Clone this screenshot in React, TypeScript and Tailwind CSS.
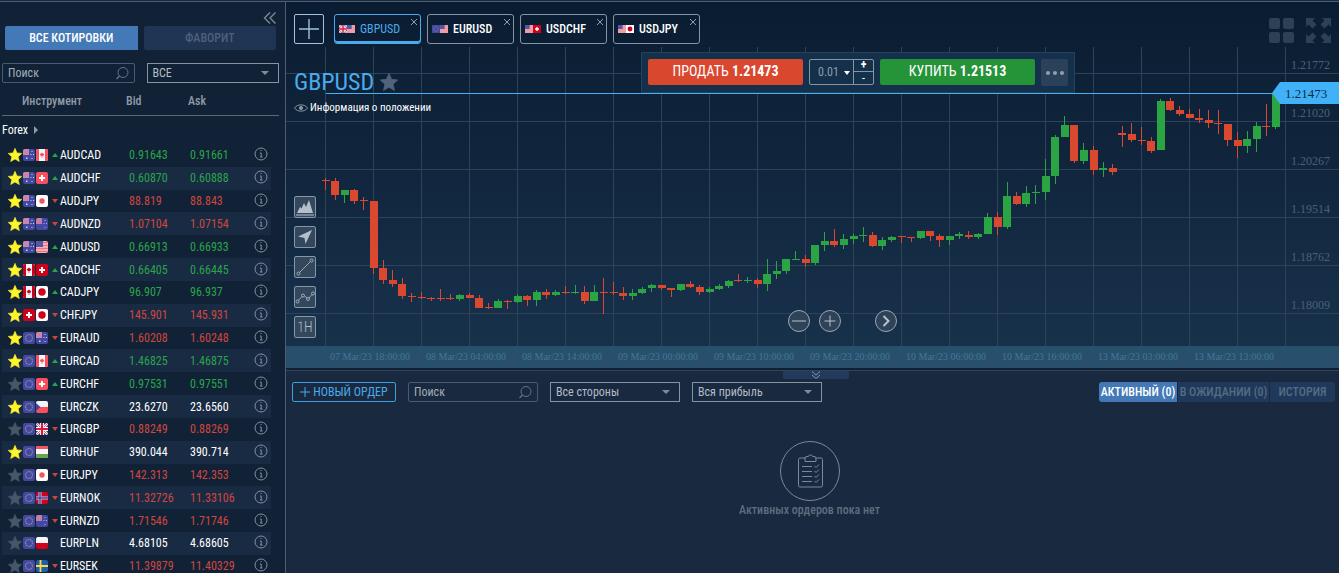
import { useState } from 'react';
import type { ReactNode } from 'react';

// --- Data types ---
type Country = 'au' | 'ca' | 'ch' | 'jp' | 'nz' | 'us' | 'eu' | 'cz' | 'gb' | 'hu' | 'no' | 'pl' | 'se';
type Trend = 'up' | 'down' | 'flat';

interface Quote {
  symbol: string;
  flags: [Country, Country];
  bid: string;
  ask: string;
  trend: Trend;
  favorite: boolean;
  soft?: boolean;
}

const quotes: Quote[] = [
  { symbol: 'AUDCAD', flags: ['au', 'ca'], bid: '0.91643', ask: '0.91661', trend: 'up', favorite: true, soft: true },
  { symbol: 'AUDCHF', flags: ['au', 'ch'], bid: '0.60870', ask: '0.60888', trend: 'up', favorite: true, soft: true },
  { symbol: 'AUDJPY', flags: ['au', 'jp'], bid: '88.819', ask: '88.843', trend: 'down', favorite: true, soft: true },
  { symbol: 'AUDNZD', flags: ['au', 'nz'], bid: '1.07104', ask: '1.07154', trend: 'down', favorite: true, soft: true },
  { symbol: 'AUDUSD', flags: ['au', 'us'], bid: '0.66913', ask: '0.66933', trend: 'up', favorite: true, soft: true },
  { symbol: 'CADCHF', flags: ['ca', 'ch'], bid: '0.66405', ask: '0.66445', trend: 'up', favorite: true },
  { symbol: 'CADJPY', flags: ['ca', 'jp'], bid: '96.907', ask: '96.937', trend: 'up', favorite: true },
  { symbol: 'CHFJPY', flags: ['ch', 'jp'], bid: '145.901', ask: '145.931', trend: 'down', favorite: true },
  { symbol: 'EURAUD', flags: ['eu', 'au'], bid: '1.60208', ask: '1.60248', trend: 'down', favorite: true, soft: true },
  { symbol: 'EURCAD', flags: ['eu', 'ca'], bid: '1.46825', ask: '1.46875', trend: 'up', favorite: true, soft: true },
  { symbol: 'EURCHF', flags: ['eu', 'ch'], bid: '0.97531', ask: '0.97551', trend: 'up', favorite: false, soft: true },
  { symbol: 'EURCZK', flags: ['eu', 'cz'], bid: '23.6270', ask: '23.6560', trend: 'flat', favorite: true, soft: true },
  { symbol: 'EURGBP', flags: ['eu', 'gb'], bid: '0.88249', ask: '0.88269', trend: 'down', favorite: false },
  { symbol: 'EURHUF', flags: ['eu', 'hu'], bid: '390.044', ask: '390.714', trend: 'flat', favorite: true, soft: true },
  { symbol: 'EURJPY', flags: ['eu', 'jp'], bid: '142.313', ask: '142.353', trend: 'down', favorite: false, soft: true },
  { symbol: 'EURNOK', flags: ['eu', 'no'], bid: '11.32726', ask: '11.33106', trend: 'down', favorite: false },
  { symbol: 'EURNZD', flags: ['eu', 'nz'], bid: '1.71546', ask: '1.71746', trend: 'down', favorite: false },
  { symbol: 'EURPLN', flags: ['eu', 'pl'], bid: '4.68105', ask: '4.68605', trend: 'flat', favorite: false },
  { symbol: 'EURSEK', flags: ['eu', 'se'], bid: '11.39879', ask: '11.40329', trend: 'down', favorite: false },
];

const openTabs: { symbol: string; flags: [Country, Country] }[] = [
  { symbol: 'GBPUSD', flags: ['gb', 'us'] },
  { symbol: 'EURUSD', flags: ['eu', 'us'] },
  { symbol: 'USDCHF', flags: ['us', 'ch'] },
  { symbol: 'USDJPY', flags: ['us', 'jp'] },
];

const timeLabels = [
  '07 Mar/23 18:00:00', '08 Mar/23 04:00:00', '08 Mar/23 14:00:00', '09 Mar/23 00:00:00', '09 Mar/23 10:00:00',
  '09 Mar/23 20:00:00', '10 Mar/23 06:00:00', '10 Mar/23 16:00:00', '13 Mar/23 03:00:00', '13 Mar/23 13:00:00',
];

const priceLabels = ['1.21772', '1.21020', '1.20267', '1.19514', '1.18762', '1.18009'];

// [direction, body top, body bottom, wick top, wick bottom]
type Candle = ['g' | 'r', number, number, number, number];

const candles: Candle[] = [
  ['r', 180, 181, 178, 190], ['r', 181, 195, 178, 200], ['g', 190, 195, 190, 203], ['r', 190, 201, 189, 204], ['r', 200, 201, 197, 210],
  ['r', 201, 268, 201, 274], ['r', 268, 280, 260, 284], ['r', 280, 284, 270, 287], ['r', 284, 296, 278, 299], ['r', 296, 297, 293, 302],
  ['r', 297, 298, 292, 299], ['r', 298, 299, 297, 301], ['r', 298, 299, 289, 301], ['r', 298, 299, 294, 300], ['g', 295, 299, 294, 301],
  ['r', 295, 298, 293, 298], ['r', 298, 308, 295, 308], ['r', 307, 308, 303, 309], ['g', 301, 308, 299, 308], ['r', 301, 302, 300, 309],
  ['g', 296, 302, 294, 303], ['r', 296, 300, 295, 306], ['g', 292, 300, 290, 306], ['r', 292, 295, 289, 299], ['g', 292, 295, 290, 296],
  ['r', 292, 293, 286, 294], ['g', 292, 293, 285, 294], ['r', 292, 301, 286, 304], ['g', 292, 301, 285, 301], ['r', 292, 293, 278, 314],
  ['r', 292, 293, 282, 295], ['r', 293, 296, 287, 300], ['g', 293, 296, 289, 300], ['g', 289, 293, 287, 294], ['g', 285, 288, 284, 292],
  ['r', 285, 288, 285, 290], ['r', 288, 290, 288, 297], ['g', 284, 290, 284, 291], ['r', 284, 287, 281, 288], ['r', 287, 292, 285, 295],
  ['g', 289, 292, 287, 293], ['g', 286, 289, 284, 290], ['g', 281, 286, 280, 288], ['r', 280, 281, 274, 282], ['g', 280, 281, 277, 283],
  ['r', 280, 284, 278, 288], ['g', 274, 284, 259, 291], ['g', 271, 274, 261, 279], ['g', 259, 271, 259, 274], ['g', 259, 260, 251, 260],
  ['r', 259, 263, 255, 267], ['g', 245, 263, 245, 265], ['g', 241, 245, 232, 251], ['r', 241, 245, 229, 247], ['g', 239, 245, 234, 249],
  ['g', 236, 239, 234, 244], ['g', 235, 236, 227, 242], ['r', 235, 246, 232, 247], ['g', 240, 246, 237, 250], ['g', 237, 240, 236, 242],
  ['r', 236, 237, 236, 243], ['r', 237, 238, 237, 242], ['g', 231, 238, 231, 239], ['r', 231, 236, 231, 241], ['r', 236, 240, 234, 247],
  ['g', 236, 240, 236, 245], ['g', 234, 236, 232, 239], ['r', 235, 237, 231, 239], ['g', 234, 237, 233, 239], ['g', 217, 234, 213, 234],
  ['r', 217, 227, 212, 235], ['g', 196, 227, 182, 229], ['r', 196, 204, 192, 205], ['g', 193, 204, 186, 207], ['g', 192, 193, 185, 204],
  ['g', 176, 192, 159, 200], ['g', 137, 176, 135, 184], ['g', 125, 137, 116, 137], ['r', 125, 161, 125, 163], ['g', 150, 161, 143, 164],
  ['r', 150, 170, 146, 175], ['g', 168, 170, 162, 177], ['r', 168, 172, 164, 175], ['r', 133, 135, 126, 147], ['r', 134, 140, 123, 142],
  ['r', 140, 141, 127, 145], ['r', 141, 151, 137, 153], ['g', 101, 150, 99, 150], ['r', 101, 110, 98, 111], ['r', 110, 114, 106, 116],
  ['r', 114, 118, 109, 118], ['r', 118, 120, 109, 123], ['r', 120, 123, 110, 128], ['r', 123, 124, 110, 134], ['r', 124, 140, 124, 146],
  ['r', 140, 146, 132, 158], ['g', 139, 146, 131, 153], ['g', 126, 139, 122, 152], ['r', 126, 127, 104, 136], ['g', 93, 127, 93, 129],
];

// --- Small drawings ---
function Flag({ country, soft, className }: { country: Country; soft?: boolean; className: string }) {
  const red = soft ? '#f8505c' : '#d0021b';
  const blue = '#4348a0';
  const white = '#f4f6fa';
  const art: Record<Country, ReactNode> = {
    au: (
      <>
        <rect width="12" height="12" fill={blue} />
        <path d="M0 0h6v6H0z" fill="#b58fc0" />
        <path d="M0 3h6M3 0v6" stroke="#f0758a" strokeWidth="1" />
        <path d="M8.500 2h1v1h-1zM7.500 5h1v1h-1zM10 5h1v1h-1zM8.500 9h1v1h-1zM3 8.500h1.500v1.500H3z" fill="#d4d8f0" />
      </>
    ),
    nz: (
      <>
        <rect width="12" height="12" fill={blue} />
        <path d="M0 0h6v6H0z" fill="#a783bd" />
        <path d="M0 3h6M3 0v6" stroke="#f0758a" strokeWidth="1" />
        <path d="M8.500 2h1v1h-1zM7.500 5h1v1h-1zM10 5h1v1h-1zM8.500 9h1v1h-1z" fill="#c9a8d8" />
      </>
    ),
    ca: (
      <>
        <rect width="12" height="12" fill={white} />
        <path d="M0 0h3v12H0zM9 0h3v12H9z" fill={red} />
        <path d="M6 3.500l1 1 1.300.5-1 2H4.700l-1-2L5 4.500zM5.700 6h.6v3h-.6z" fill={red} />
      </>
    ),
    ch: (
      <>
        <rect width="12" height="12" fill={red} />
        <path d="M5 3h2v2h2v2H7v2H5V7H3V5h2z" fill="#fff" />
      </>
    ),
    jp: (
      <>
        <rect width="12" height="12" fill="#fff" />
        <circle cx="6" cy="6" r={soft ? 2.7 : 3.7} fill={red} />
      </>
    ),
    us: (
      <>
        <rect width="12" height="12" fill="#f6c5cc" />
        <path d="M0 1.500h12M0 4.500h12M0 7.500h12M0 10.500h12" stroke="#f0707e" strokeWidth="1.500" />
        <path d="M0 0h7v6H0z" fill="#5257a6" />
      </>
    ),
    eu: (
      <>
        <rect width="12" height="12" fill={blue} />
        <circle cx="6" cy="6" r="3.500" fill="none" stroke="#8a83a0" strokeWidth="1.200" strokeDasharray="1.400 .5" />
      </>
    ),
    cz: (
      <>
        <rect width="12" height="6" fill={white} />
        <rect y="6" width="12" height="6" fill={red} />
        <path d="M0 2l4.500 4L0 10z" fill={blue} />
      </>
    ),
    gb: (
      <>
        <rect width="12" height="12" fill="#3d4599" />
        <path d="M0 0l12 12M12 0L0 12" stroke="#fff" strokeWidth="2.400" />
        <path d="M0 0l12 12M12 0L0 12" stroke="#e0304a" strokeWidth=".8" />
        <path d="M6 0v12M0 6h12" stroke="#fff" strokeWidth="4" />
        <path d="M6 0v12M0 6h12" stroke="#d91a35" strokeWidth="2.200" />
      </>
    ),
    hu: (
      <>
        <rect width="12" height="12" fill={white} />
        <rect width="12" height="3" fill={red} />
        <rect y="8" width="12" height="4" fill="#68a352" />
      </>
    ),
    no: (
      <>
        <rect width="12" height="12" fill={red} />
        <path d="M4 0v12M0 6h12" stroke="#c5c7e6" strokeWidth="3" />
        <path d="M4 0v12M0 6h12" stroke={blue} strokeWidth="1.400" />
      </>
    ),
    pl: (
      <>
        <rect width="12" height="6" fill={white} />
        <rect y="6" width="12" height="6" fill={red} />
      </>
    ),
    se: (
      <>
        <rect width="12" height="12" fill="#1c5fae" />
        <path d="M4.500 0v12M0 6h12" stroke="#ffd83a" strokeWidth="1.800" />
      </>
    ),
  };
  return (
    <svg viewBox="0 0 12 12" className={`block shrink-0 ${className}`} aria-hidden="true">
      {art[country]}
    </svg>
  );
}

function Star({ className }: { className: string }) {
  return (
    <svg viewBox="0 0 14 14" className={className} aria-hidden="true">
      <path
        fill="currentColor"
        stroke="currentColor"
        strokeWidth=".6"
        d="M7 .3l2 4.600 4.800.5-3.600 3.300 1.100 4.900L7 11.100l-4.300 2.500 1.100-4.900L.2 5.400 5 4.900z"
      />
    </svg>
  );
}

function TrendMark({ trend }: { trend: Trend }) {
  if (trend === 'flat') return null;
  return (
    <svg viewBox="0 0 6 4" className="h-1 w-1.5" aria-hidden="true">
      {trend === 'up' ? <path d="M3 0l3 4H0z" fill="#27a54a" /> : <path d="M0 0h6L3 4z" fill="#cf4438" />}
    </svg>
  );
}

function SearchBox({ id, className }: { id: string; className: string }) {
  return (
    <div className={`flex h-5 items-center rounded-[2px] border border-[#4a5b6e] px-[5px] ${className}`}>
      <input
        id={id}
        type="text"
        placeholder="Поиск"
        aria-label="Поиск"
        className="w-full min-w-0 bg-transparent text-xs leading-4 text-[#b4bcc6] outline-none placeholder:text-[#a3adb8]"
      />
      <svg viewBox="0 0 14 14" className="h-3.5 w-3.5 shrink-0" fill="none" stroke="#66748a" aria-hidden="true">
        <circle cx="8" cy="6.500" r="5" />
        <path d="M4.500 10L1.500 13" strokeWidth="1.200" />
      </svg>
    </div>
  );
}

function Dropdown({ label, options, className }: { label: string; options: string[]; className: string }) {
  return (
    <div className={`relative h-5 ${className}`}>
      <select
        aria-label={label}
        className="block h-5 w-full appearance-none border border-[#8494a3] bg-transparent px-[5px] text-xs leading-4 text-[#b4bcc6] outline-none"
      >
        {options.map((option) => (
          <option key={option}>{option}</option>
        ))}
      </select>
      <svg viewBox="0 0 8 4" className="pointer-events-none absolute top-2 right-2.5 h-1 w-2" aria-hidden="true">
        <path d="M0 0h8L4 4z" fill="#7d8b9a" />
      </svg>
    </div>
  );
}

// --- Left panel with quotes ---
function QuotesPanel() {
  const colors = { up: 'text-[#2aa44a]', down: 'text-[#d0463f]', flat: 'text-white' };

  return (
    <aside className="w-[286px] shrink-0 overflow-hidden border-r border-[#4b5f74] bg-[#112236] pl-0.5">
      <div className="flex h-6 items-end justify-end pr-2">
        <button type="button" aria-label="Свернуть" className="mb-0.5">
          <svg viewBox="0 0 14 12" className="block h-3 w-3.5" fill="none" stroke="#7b8794" strokeWidth="1.400">
            <path d="M7 .5L1.500 6 7 11.500M12.500.5L7 6l5.500 5.500" />
          </svg>
        </button>
      </div>

      <div className="flex gap-1.5 pr-[9px] pl-[3px] text-xs leading-4">
        <button type="button" className="h-6 flex-1 rounded-l-[2px] bg-[#4379b7] font-medium text-white">
          ВСЕ КОТИРОВКИ
        </button>
        <button type="button" className="h-6 flex-1 rounded-[2px] bg-[#1f3553] font-medium text-[#4d617c]">
          ФАВОРИТ
        </button>
      </div>

      <div className="mt-[13px] grid grid-cols-2 gap-3 pr-1.5">
        <SearchBox id="quote-search" className="min-w-0" />
        <Dropdown label="Категория" options={['ВСЕ', 'Forex']} className="min-w-0" />
      </div>

      <table className="mt-1 w-[277px] table-fixed border-collapse text-left text-xs leading-4">
        <colgroup>
          <col className="w-[48px]" />
          <col className="w-[10px]" />
          <col className="w-[69px]" />
          <col className="w-[61px]" />
          <col className="w-[64px]" />
          <col className="w-[17px]" />
          <col className="w-[8px]" />
        </colgroup>
        <thead>
          <tr className="h-[28px] border-b border-[#5b6a7a] text-[#8f9aa6]">
            <th colSpan={3} className="pl-5 font-medium">Инструмент</th>
            <th className="font-medium"><span className="-ml-[3px]">Bid</span></th>
            <th className="font-medium"><span className="-ml-0.5">Ask</span></th>
            <th colSpan={2}></th>
          </tr>
        </thead>
        <tbody>
          <tr className="h-[29px]">
            <th colSpan={7} scope="rowgroup" className="font-normal text-white">
              <button type="button" className="flex items-center gap-1.5">
                Forex
                <svg viewBox="0 0 4 8" className="h-2 w-1" aria-hidden="true">
                  <path d="M0 0l4 4-4 4z" fill="#8f9aa6" />
                </svg>
              </button>
            </th>
          </tr>
        </tbody>
        <tbody className="h-[434px]">
          {quotes.map((quote) => (
            <tr key={quote.symbol} className="group">
              <td className="p-0 group-even:bg-[#182b43]">
                <div className="flex items-center gap-px pl-1.5">
                  <Star className={`h-3.5 w-3.5 shrink-0 ${quote.favorite ? 'text-[#fff52c]' : 'text-[#465768]'}`} />
                  <Flag country={quote.flags[0]} soft={quote.soft} className="h-3 w-3 rounded-[2px]" />
                  <Flag country={quote.flags[1]} soft={quote.soft} className="h-3 w-3 rounded-[2px]" />
                </div>
              </td>
              <td className="p-0 group-even:bg-[#182b43]">
                <div className="flex justify-center"><TrendMark trend={quote.trend} /></div>
              </td>
              <td className="p-0 text-white group-even:bg-[#182b43]">{quote.symbol}</td>
              <td className={`p-0 group-even:bg-[#182b43] ${colors[quote.trend]}`}>{quote.bid}</td>
              <td className={`p-0 group-even:bg-[#182b43] ${colors[quote.trend]}`}>{quote.ask}</td>
              <td className="p-0 group-even:bg-[#182b43]">
                <button type="button" aria-label={`Информация ${quote.symbol}`} className="mb-0.5 block">
                  <svg viewBox="0 0 14 14" className="block h-3.5 w-3.5" fill="none" stroke="#8290a0">
                    <circle cx="7" cy="7" r="6" />
                    <path d="M6 6h1.200v4M6 10h2.500M6.500 3.500h1" />
                  </svg>
                </button>
              </td>
              <td></td>
            </tr>
          ))}
        </tbody>
      </table>
    </aside>
  );
}

// --- Candlestick chart ---
function PriceChart() {
  return (
    <svg viewBox="0 0 1053 344" preserveAspectRatio="xMaxYMin slice" className="absolute inset-0 h-full w-full" aria-label="GBPUSD">
      {/* coordinates below are in page space */}
      <g transform="translate(-286 -2)">
        <g stroke="#2c4359" shapeRendering="crispEdges">
          {priceLabels.map((label, i) => (
            <path key={label} d={`M286 ${73.5 + i * 48}H1339`} />
          ))}
          {Array.from({ length: 21 }, (_, i) => (
            <path key={i} d={`M${325.5 + i * 48} 47V346`} />
          ))}
        </g>
        {candles.map(([dir, top, bottom, high, low], i) => {
          const x = 325.5 + i * 9.6;
          const fill = dir === 'g' ? '#2ba544' : '#d9482f';
          return (
            <g key={i} fill={fill} shapeRendering="crispEdges">
              <rect x={x - 0.5} y={high} width="1" height={low - high} />
              <rect x={x - 4} y={top} width="8" height={bottom - top} />
            </g>
          );
        })}
        <rect x="326" y="93" width="949" height="1" fill="#42b2f8" />
        <path d="M1272 93l8-11h59v22h-59z" fill="#42b2f8" />
        <g fontFamily="'Liberation Serif', serif" fontSize="12" fill="#4b6076">
          {priceLabels.map((label, i) => (
            <text key={label} x="1291" y={69 + i * 48}>{label}</text>
          ))}
        </g>
        <text x="1285" y="98" fontFamily="'Liberation Serif', serif" fontSize="13" fill="#0c2b48">1.21473</text>
      </g>
    </svg>
  );
}

function ToolButton({ label, children }: { label: string; children: ReactNode }) {
  return (
    <button
      type="button"
      aria-label={label}
      className="flex h-[22px] w-[22px] items-center justify-center rounded-[2px] border border-[#8696a6] bg-[#34485d] text-[#b3bfca]"
    >
      {children}
    </button>
  );
}

function RoundButton({ label, children }: { label: string; children: ReactNode }) {
  return (
    <button type="button" aria-label={label} className="h-[22px] w-[22px] rounded-full border border-[#9aa8b5] bg-[#2e4358]">
      <svg viewBox="0 0 20 20" className="block h-5 w-5" fill="none" stroke="#b7c2cc">
        {children}
      </svg>
    </button>
  );
}

function TradeBar() {
  return (
    <div className="absolute top-[50px] right-[264px] flex h-[41px] items-start gap-1.5 border border-[#26415a] bg-[#15304b] px-1.5 pt-1.5">
      <button type="button" className="h-[26px] w-[155px] rounded-[2px] bg-[#d9472f] pb-0.5 text-sm leading-5 text-white">
        ПРОДАТЬ <b>1.21473</b>
      </button>
      <div className="flex h-[26px] w-[65px] rounded-[2px] border border-[#8595a5] text-[#8f9dab]">
        <div className="relative flex-1">
          <select aria-label="Объём" className="block h-full w-full appearance-none bg-transparent pl-2 text-xs leading-4 outline-none">
            <option>0.01</option>
            <option>0.10</option>
          </select>
          <svg viewBox="0 0 6 4" className="pointer-events-none absolute top-[11px] right-[3px] h-1 w-1.5" aria-hidden="true">
            <path d="M0 0h6L3 4z" fill="#fff" />
          </svg>
        </div>
        <div className="flex w-5 flex-col border-l border-[#8595a5] text-xs leading-[11px] text-white">
          <button type="button" aria-label="Увеличить" className="h-3 border-b border-[#8595a5] font-bold">+</button>
          <button type="button" aria-label="Уменьшить" className="h-3">-</button>
        </div>
      </div>
      <button type="button" className="h-[26px] w-[155px] rounded-[2px] bg-[#259338] pb-0.5 text-sm leading-5 text-white">
        КУПИТЬ <b>1.21513</b>
      </button>
      <button type="button" aria-label="Ещё" className="flex h-[27px] w-[27px] items-center justify-center gap-[3px] rounded-[2px] bg-[#2b4159]">
        <span className="h-1 w-1 rounded-full bg-[#8fa0b1]" />
        <span className="h-1 w-1 rounded-full bg-[#8fa0b1]" />
        <span className="h-1 w-1 rounded-full bg-[#8fa0b1]" />
      </button>
    </div>
  );
}

function ChartPanel() {
  const [active, setActive] = useState('GBPUSD');

  return (
    <section className="relative h-[344px] shrink-0 bg-linear-to-b from-[#0a1c31] to-[#18314b]">
      <PriceChart />

      <div className="relative flex items-start pt-3 pr-2 pl-2">
        <button type="button" aria-label="Добавить" className="flex h-[30px] w-[30px] items-center justify-center rounded-[2px] border border-[#a3c3d6]">
          <svg viewBox="0 0 20 20" className="h-5 w-5" stroke="#a3c3d6" strokeWidth="1.400">
            <path d="M10 0v20M0 10h20" />
          </svg>
        </button>
        <div className="ml-2.5 flex gap-1.5">
          {openTabs.map((tab) => (
            <div
              key={tab.symbol}
              className={`relative flex h-[30px] w-[87px] items-center rounded-[3px] border pl-1 ${
                active === tab.symbol ? 'border-[#4aabec] text-[#4aabec] shadow-[inset_0_-2px_0_#4aabec]' : 'border-[#8595a5] text-white'
              }`}
            >
              <button type="button" className="flex items-center text-xs leading-4" onClick={() => setActive(tab.symbol)}>
                <Flag country={tab.flags[0]} className="h-2 w-2" />
                <Flag country={tab.flags[1]} className="mr-[5px] h-2 w-2" />
                <span className={active === tab.symbol ? '' : 'font-medium'}>{tab.symbol}</span>
              </button>
              <button type="button" aria-label={`Закрыть ${tab.symbol}`} className="absolute top-1 right-[3px]">
                <svg viewBox="0 0 6 6" className="block h-1.5 w-1.5" stroke="#b5c0ca" strokeWidth=".8">
                  <path d="M0 0l6 6M6 0L0 6" />
                </svg>
              </button>
            </div>
          ))}
        </div>
        <div className="mt-1 ml-auto flex gap-3 text-[#2c4056]">
          <button type="button" aria-label="Сетка" className="grid h-[25px] w-[25px] grid-cols-2 gap-[3px]">
            <span className="h-[11px] rounded-[2px] bg-current" />
            <span className="h-[11px] rounded-[2px] bg-current" />
            <span className="h-[11px] rounded-[2px] bg-current" />
            <span className="h-[11px] rounded-[2px] bg-current" />
          </button>
          <button type="button" aria-label="Во весь экран">
            <svg viewBox="0 0 25 25" className="block h-[25px] w-[25px]" fill="currentColor">
              <path id="corner" d="M0 0h9L6.500 2.500l4 4-4 4-4-4L0 9z" />
              <use href="#corner" transform="rotate(90 12.500 12.500)" />
              <use href="#corner" transform="rotate(180 12.500 12.500)" />
              <use href="#corner" transform="rotate(270 12.500 12.500)" />
            </svg>
          </button>
        </div>
      </div>

      <div className="relative mt-[22px] flex w-fit items-center gap-1.5 pl-2">
        <h1 className="text-2xl leading-8 text-[#4aabec]">GBPUSD</h1>
        <Star className="h-[18px] w-[18px] text-[#50637a]" />
      </div>
      <button type="button" className="relative mt-1 ml-2 flex items-center gap-0.5 text-[11px] leading-3 text-white">
        <svg viewBox="0 0 14 8" className="h-2 w-3.5" fill="none" stroke="#8795a3">
          <path d="M.5 4C3-.2 11-.2 13.500 4 11 8.200 3 8.200.5 4z" />
          <circle cx="7" cy="4" r="1.600" fill="#8795a3" />
        </svg>
        Информация о положении
      </button>

      <TradeBar />

      <div className="absolute top-[194px] left-2 flex flex-col gap-2">
        <ToolButton label="Тип графика">
          <svg viewBox="0 0 20 20" className="h-5 w-5" fill="currentColor">
            <path d="M2 16l3-6 1.500 1.500L9 6l2 4 3-7 4 13z" />
            <path d="M1 17.500h18v1H1z" />
          </svg>
        </ToolButton>
        <ToolButton label="Курсор">
          <svg viewBox="0 0 20 20" className="h-5 w-5" fill="currentColor">
            <path d="M17 3l-6.500 14-1-6L3 9.500z" />
          </svg>
        </ToolButton>
        <ToolButton label="Линия">
          <svg viewBox="0 0 20 20" className="h-5 w-5" fill="none" stroke="currentColor" strokeWidth=".8">
            <path d="M4.500 15.500l11-11" />
            <circle cx="3.500" cy="16.500" r="1.500" />
            <circle cx="16.500" cy="3.500" r="1.500" />
          </svg>
        </ToolButton>
        <ToolButton label="Индикаторы">
          <svg viewBox="0 0 20 20" className="h-5 w-5" fill="none" stroke="currentColor" strokeWidth=".8">
            <path d="M3.500 13.200L7 9.500M9.500 9l2.500 2M14 11l3-3.500" />
            <circle cx="2.500" cy="14.500" r="1.500" />
            <circle cx="8" cy="8.500" r="1.500" />
            <circle cx="13" cy="12" r="1.500" />
            <circle cx="18" cy="6.500" r="1.500" />
          </svg>
        </ToolButton>
        <ToolButton label="Таймфрейм">
          <span className="text-sm leading-4 font-light">1H</span>
        </ToolButton>
      </div>

      <div className="absolute right-[442px] bottom-3.5 flex">
        <RoundButton label="Уменьшить масштаб"><path d="M3 10h14" /></RoundButton>
        <span className="w-[9px]" />
        <RoundButton label="Увеличить масштаб"><path d="M4.500 10h11M10 4.500v11" /></RoundButton>
        <span className="w-[34px]" />
        <RoundButton label="Вперёд"><path d="M7.500 5l5 5-5 5" strokeWidth="2" /></RoundButton>
      </div>
    </section>
  );
}

// --- Orders ---
function OrdersPanel() {
  return (
    <section className="relative flex-1 border-t border-[#304458] bg-[#19293f]">
      <button
        type="button"
        aria-label="Свернуть панель"
        className="absolute top-0 right-[490px] flex h-2 w-[66px] items-center justify-center rounded-b-[2px] bg-[#223a5d]"
      >
        <svg viewBox="0 0 8 8" className="h-2 w-2" fill="none" stroke="#8496ab">
          <path d="M0 .5L4 4 8 .5M0 4l4 3.500L8 4" />
        </svg>
      </button>

      <div className="flex items-center gap-3 pt-[11px] pr-1 pl-1.5 text-xs leading-4">
        <button type="button" className="flex h-5 w-[104px] items-center justify-center gap-[3px] rounded-[2px] border border-[#3f9fe0] text-[#4aabec]">
          <svg viewBox="0 0 10 10" className="h-2.5 w-2.5" stroke="currentColor">
            <path d="M5 0v10M0 5h10" />
          </svg>
          НОВЫЙ ОРДЕР
        </button>
        <SearchBox id="order-search" className="w-[130px]" />
        <Dropdown label="Сторона" options={['Все стороны', 'Покупка', 'Продажа']} className="w-[130px]" />
        <Dropdown label="Прибыль" options={['Вся прибыль', 'Прибыль', 'Убыток']} className="w-[130px]" />
        <div className="ml-auto flex gap-px font-medium whitespace-nowrap">
          <button type="button" className="h-5 w-[78px] rounded-l-[3px] bg-[#4379b7] text-white">АКТИВНЫЙ (0)</button>
          <button type="button" className="h-5 w-[91px] bg-[#20395a] text-[#566b85]">В ОЖИДАНИИ (0)</button>
          <button type="button" className="h-5 w-[65px] rounded-r-[3px] bg-[#20395a] text-[#566b85]">ИСТОРИЯ</button>
        </div>
      </div>

      <div className="mt-[38px] flex flex-col items-center pr-1.5 text-[#5f6e7e]">
        <svg viewBox="0 0 62 62" className="h-[62px] w-[62px]" fill="none" stroke="#7b8998" aria-hidden="true">
          <circle cx="31" cy="31" r="29.500" />
          <path d="M27 18h-6a1.500 1.500 0 0 0-1.500 1.500v26A1.500 1.500 0 0 0 21 47h21a1.500 1.500 0 0 0 1.500-1.500v-26A1.500 1.500 0 0 0 42 18h-6" />
          <path d="M26 21.500v-3.500q0-1.500 2-1.500h1.500q0-1.500 2-1.500t2 1.500H35q2 0 2 1.500v3.500z" />
          <path d="M23 26.500h10M23 31.500h10M23 36.500h10M23 41.500h10" />
          <path d="M35.500 26l1.500 1.500 3-3M35.500 31l1.500 1.500 3-3M35.500 36l1.500 1.500 3-3M35.500 41l1.500 1.500 3-3" />
        </svg>
        <p className="text-xs leading-4 font-medium">Активных ордеров пока нет</p>
      </div>
    </section>
  );
}

export default function App() {
  return (
    <div className="flex h-screen w-full flex-col overflow-hidden bg-[#19293f] font-['Roboto_Condensed','Liberation_Sans_Narrow',sans-serif]">
      <div className="h-0.5 shrink-0 border-b border-[#4b5f74]" />
      <div className="flex min-h-0 flex-1">
        <QuotesPanel />
        <main className="flex min-w-0 flex-1 flex-col overflow-hidden">
          <ChartPanel />
          <div className="flex h-[22px] shrink-0 items-center bg-[#28506d] pl-9 font-['Liberation_Serif',serif] text-[10px] leading-3 whitespace-nowrap text-[#437799]">
            {timeLabels.map((label) => (
              <span key={label} className="w-24 shrink-0 text-center">{label}</span>
            ))}
          </div>
          <div className="h-0.5 shrink-0 bg-[#101f31]" />
          <OrdersPanel />
        </main>
      </div>
    </div>
  );
}
